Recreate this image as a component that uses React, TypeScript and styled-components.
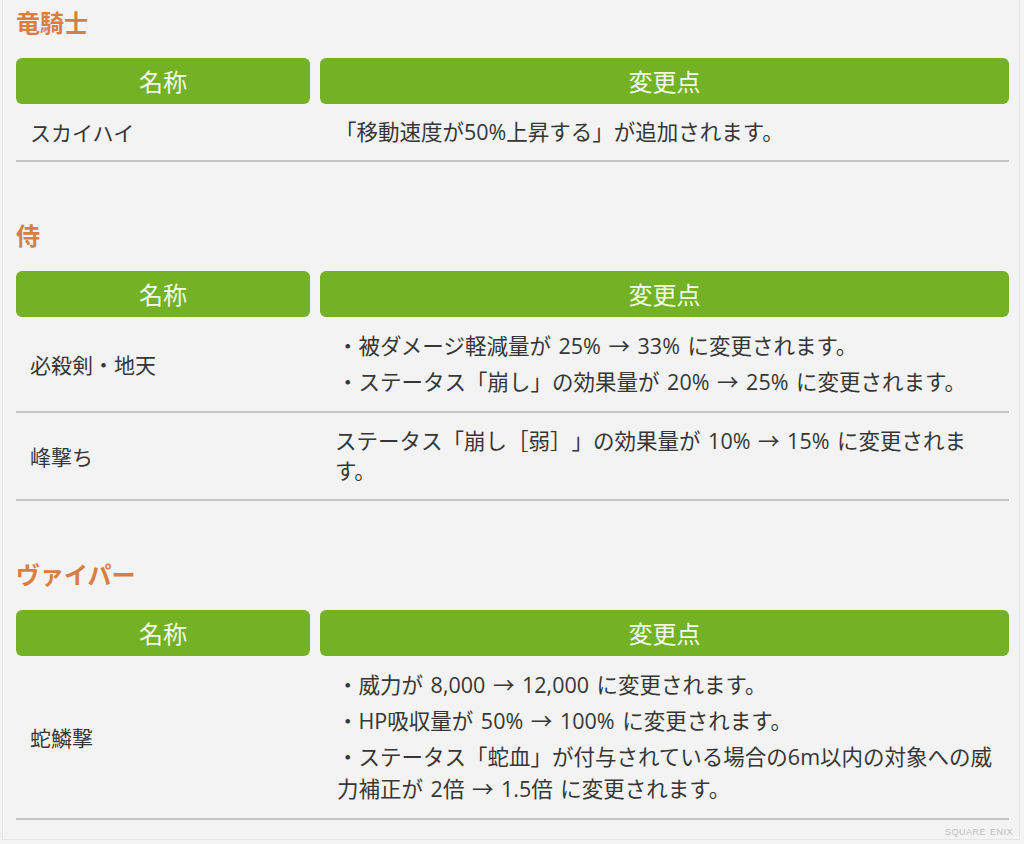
import React from "react";
import styled, { createGlobalStyle } from "styled-components";

type Row = {
    name: string;
    items?: string[];
    text?: string;
};

type Section = {
    job: string;
    rows: Row[];
};

const sections: Section[] = [
    {
        job: "竜騎士",
        rows: [{ name: "スカイハイ", text: "「移動速度が50%上昇する」が追加されます。" }],
    },
    {
        job: "侍",
        rows: [
            {
                name: "必殺剣・地天",
                items: [
                    "・被ダメージ軽減量が 25% → 33% に変更されます。",
                    "・ステータス「崩し」の効果量が 20% → 25% に変更されます。",
                ],
            },
            { name: "峰撃ち", text: "ステータス「崩し［弱］」の効果量が 10% → 15% に変更されます。" },
        ],
    },
    {
        job: "ヴァイパー",
        rows: [
            {
                name: "蛇鱗撃",
                items: [
                    "・威力が 8,000 → 12,000 に変更されます。",
                    "・HP吸収量が 50% → 100% に変更されます。",
                    "・ステータス「蛇血」が付与されている場合の6m以内の対象への威力補正が 2倍 → 1.5倍 に変更されます。",
                ],
            },
        ],
    },
];

const App = () => {
    return (
        <Page>
            <GlobalStyle />
            {sections.map((s) => (
                <Block key={s.job}>
                    <JobTitle>{s.job}</JobTitle>
                    <Table>
                        <HeadCell>名称</HeadCell>
                        <HeadCell>変更点</HeadCell>
                        {s.rows.map((r) => (
                            <React.Fragment key={r.name}>
                                <NameCell>{r.name}</NameCell>
                                <ChangeCell>
                                    {r.text && <Para>{r.text}</Para>}
                                    {r.items && (
                                        <List>
                                            {r.items.map((it) => (
                                                <li key={it}>{it}</li>
                                            ))}
                                        </List>
                                    )}
                                </ChangeCell>
                            </React.Fragment>
                        ))}
                    </Table>
                </Block>
            ))}
            <Copyright>SQUARE ENIX</Copyright>
        </Page>
    );
};

const GlobalStyle = createGlobalStyle`
    body {
        margin: 0;
        background: #f3f3f3;
        font-family: "Open Sans", "Noto Sans CJK JP", sans-serif;
        color: #363636;
        text-spacing-trim: space-all;
    }
`;
const Page = styled.div`
    position: relative;
    box-sizing: border-box;
    width: 1018px;
    height: 840px;
    margin-left: 2px;
    padding: 4px 10px 0 13px;
    border-left: 1px solid #e6e6e6;
    border-right: 1px solid #e6e6e6;
    border-bottom: 1px solid #e6e6e6;
    overflow: hidden;
`;
const Block = styled.section`
    margin-bottom: 55px;
`;
const JobTitle = styled.h2`
    margin: 0 0 18px;
    font-family: "Noto Sans CJK JP", sans-serif;
    font-size: 24px;
    line-height: 36px;
    font-weight: 700;
    color: #da7d40;
`;
const Table = styled.div`
    display: grid;
    grid-template-columns: 294px 1fr;
    column-gap: 10px;
`;
const HeadCell = styled.div`
    height: 46px;
    border-radius: 6px;
    background: #73b224;
    color: #f4faec;
    font-family: "Noto Sans CJK JP", sans-serif;
    font-size: 24px;
    line-height: 46px;
    text-align: center;
`;
const NameCell = styled.div`
    display: flex;
    align-items: center;
    padding: 13px 14px;
    font-size: 21px;
    border-bottom: 2px solid #c4c4c4;
    margin-right: -10px;
`;
const ChangeCell = styled.div`
    display: flex;
    flex-direction: column;
    justify-content: center;
    padding: 13px 12px 13px 15px;
    font-size: 21.5px;
    word-spacing: 2px;
    border-bottom: 2px solid #c4c4c4;
`;
const Para = styled.p`
    margin: 0;
    line-height: 30px;
`;
const List = styled.ul`
    margin: 0;
    padding: 0 0 0 2px;
    list-style: none;
    line-height: 32px;
    li + li {
        margin-top: 4px;
    }
`;
const Copyright = styled.div`
    position: absolute;
    right: 6px;
    bottom: 2px;
    font-family: "Liberation Sans", sans-serif;
    font-size: 9px;
    letter-spacing: 0.5px;
    word-spacing: 1px;
    color: #bdbdbd;
`;

export default App;
